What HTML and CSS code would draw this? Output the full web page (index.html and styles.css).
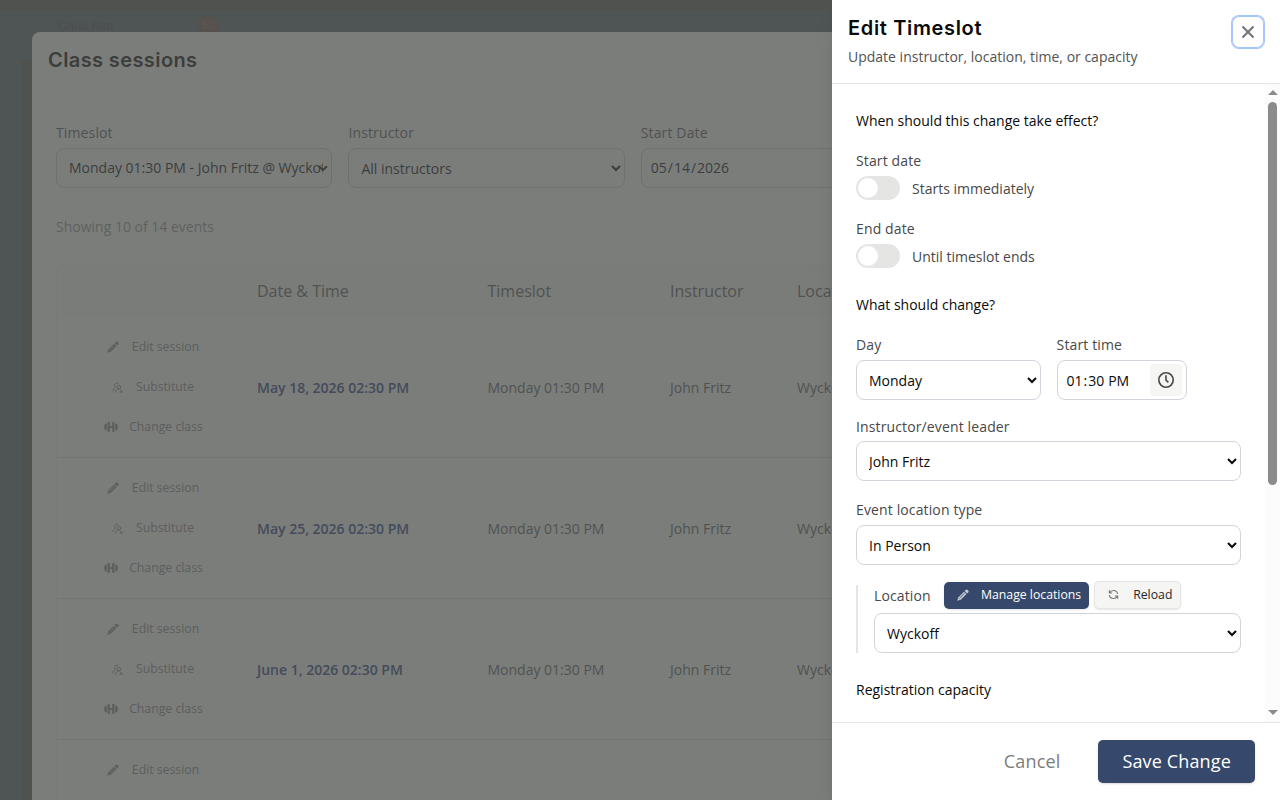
FILE: index.html
```html
<!DOCTYPE html>
<html lang="en">
<head>
    <meta charset="UTF-8">
    <meta name="viewport" content="width=device-width, initial-scale=1.0">
    <title>Edit Timeslot</title>
    <link rel="stylesheet" href="styles.css">
</head>
<body>
    <!-- shared icons -->
    <svg class="sprite" aria-hidden="true">
        <symbol id="pencil" viewBox="0 0 16 16">
            <path fill="currentColor" fill-rule="evenodd" d="M11.600 1.200a1.800 1.800 0 0 1 2.500 0l.8.8a1.800 1.800 0 0 1 0 2.500l-1.500 1.500-3.300-3.300zM9.300 3.500l3.300 3.300-7.600 7.600L.3 15.700l1.300-4.500zM9.500 5.600l-5.400 5.400.5.500 5.400-5.400zM2.700 12.200l-.5 1.600 1.600-.5z"/>
        </symbol>
        <symbol id="swap-user" viewBox="0 0 16 16">
            <g fill="none" stroke="currentColor" stroke-width="1.3" stroke-linecap="round">
                <circle cx="9.8" cy="7.4" r="2.7"/>
                <path d="M5 15c.4-2.400 1.900-4.300 4.500-4.600M12 11.200l2.600 3.300M11.800 14.600h3.400M4.200 7.200C2.900 4.200 4.500 1.500 7 1.500c1 0 1.600.4 2 1M4.400 8.500C2.500 9.200 1.400 10.600 1.200 12.500"/>
            </g>
        </symbol>
        <symbol id="dumbbell" viewBox="0 0 18 14">
            <g fill="currentColor">
                <rect x="1.600" y="3" width="2.400" height="8" rx="1.200"/>
                <rect x="5" y="1" width="2.600" height="12" rx="1.200"/>
                <rect x="10.400" y="1" width="2.600" height="12" rx="1.200"/>
                <rect x="14" y="3" width="2.400" height="8" rx="1.200"/>
                <rect x="0.600" y="6" width="1.400" height="2"/>
                <rect x="7" y="6" width="4" height="2"/>
                <rect x="16" y="6" width="1.400" height="2"/>
            </g>
        </symbol>
        <symbol id="reload" viewBox="0 0 16 16">
            <path fill="none" stroke="currentColor" stroke-width="1.700" d="M2 1.800v4h4M2.300 5.500C3.500 3.300 5.600 2.200 8 2.200c3 0 5.500 2 6 4.800M14 14.200v-4h-4M13.700 10.500c-1.200 2.200-3.300 3.300-5.700 3.300-3 0-5.500-2-6-4.800"/>
        </symbol>
    </svg>

    <div class="page">
        <div class="topbar"></div>
        <div class="page-head">
            <span class="user-name">Chris Alto</span>
            <span class="badge">50</span>
            <span class="page-title">Edit Class of</span>
            <span class="page-title page-title-end">and Yoga</span>
        </div>
        <div class="sidebar"></div>
    </div>

    <div class="modal">
        <h2 class="title modal-title">Class sessions</h2>
        <div class="filters">
            <label class="field">Timeslot
                <span class="timeslot">
                    <select class="control"><option>Monday 01:30 PM - John Fritz @ Wyckoff</option></select>
                    <svg class="chevron" width="10" height="7" viewBox="0 0 10 7"><path d="M1 1.300l4 3.700 4-3.700" fill="none" stroke="currentColor" stroke-width="2"/></svg>
                </span>
            </label>
            <label class="field">Instructor
                <select class="control"><option>All instructors</option></select>
            </label>
            <label class="field">Start Date
                <input class="control" type="date" value="2026-05-14">
            </label>
        </div>
        <p class="count">Showing 10 of 14 events</p>
        <div class="table">
            <div class="row row-head">
                <div></div><div>Date &amp; Time</div><div>Timeslot</div><div>Instructor</div><div>Location</div>
            </div>
            <div class="row">
                <div class="actions">
                    <span class="action"><svg class="i-pencil"><use href="#pencil"/></svg>Edit session</span>
                    <span class="action"><svg class="i-swap"><use href="#swap-user"/></svg>Substitute</span>
                    <span class="action"><svg class="i-bell"><use href="#dumbbell"/></svg>Change class</span>
                </div>
                <div class="date">May 18, 2026 02:30 PM</div><div>Monday 01:30 PM</div><div>John Fritz</div><div>Wyckoff</div>
            </div>
            <div class="row">
                <div class="actions">
                    <span class="action"><svg class="i-pencil"><use href="#pencil"/></svg>Edit session</span>
                    <span class="action"><svg class="i-swap"><use href="#swap-user"/></svg>Substitute</span>
                    <span class="action"><svg class="i-bell"><use href="#dumbbell"/></svg>Change class</span>
                </div>
                <div class="date">May 25, 2026 02:30 PM</div><div>Monday 01:30 PM</div><div>John Fritz</div><div>Wyckoff</div>
            </div>
            <div class="row">
                <div class="actions">
                    <span class="action"><svg class="i-pencil"><use href="#pencil"/></svg>Edit session</span>
                    <span class="action"><svg class="i-swap"><use href="#swap-user"/></svg>Substitute</span>
                    <span class="action"><svg class="i-bell"><use href="#dumbbell"/></svg>Change class</span>
                </div>
                <div class="date">June 1, 2026 02:30 PM</div><div>Monday 01:30 PM</div><div>John Fritz</div><div>Wyckoff</div>
            </div>
            <div class="row row-last">
                <div class="actions">
                    <span class="action"><svg class="i-pencil"><use href="#pencil"/></svg>Edit session</span>
                </div>
            </div>
        </div>
    </div>

    <div class="drawer">
        <header class="drawer-head">
            <div>
                <h2 class="title drawer-title">Edit Timeslot</h2>
                <p class="subtitle">Update instructor, location, time, or capacity</p>
            </div>
            <button class="close" aria-label="Close">
                <svg width="14" height="14" viewBox="0 0 14 14"><path d="M1.500 1.500l11 11M12.500 1.500l-11 11" stroke="currentColor" stroke-width="2" fill="none"/></svg>
            </button>
        </header>

        <div class="drawer-main">
            <form class="form">
                <h3 class="section">When should this change take effect?</h3>
                <div class="field toggle-field">Start date
                    <div class="toggle-row"><span class="toggle"></span><span class="toggle-text">Starts immediately</span></div>
                </div>
                <div class="field toggle-field">End date
                    <div class="toggle-row"><span class="toggle"></span><span class="toggle-text">Until timeslot ends</span></div>
                </div>

                <h3 class="section section-change">What should change?</h3>
                <div class="day-time">
                    <label class="field">Day
                        <select class="control"><option>Monday</option></select>
                    </label>
                    <label class="field">Start time
                        <span class="control time-box">
                            <input class="time" type="time" value="13:30">
                            <span class="clock">
                                <svg width="18" height="18" viewBox="0 0 18 18" fill="none" stroke="currentColor" stroke-width="1.600"><circle cx="9" cy="9" r="7.200"/><path d="M9 4.200v5l2.400 2.200"/></svg>
                            </span>
                        </span>
                    </label>
                </div>
                <label class="field leader">Instructor/event leader
                    <select class="control"><option>John Fritz</option></select>
                </label>
                <label class="field type">Event location type
                    <select class="control"><option>In Person</option></select>
                </label>
                <div class="location">
                    <div class="location-head">
                        <span class="location-label">Location</span>
                        <button type="button" class="btn-small btn-manage"><svg class="i-pencil"><use href="#pencil"/></svg>Manage locations</button>
                        <button type="button" class="btn-small btn-reload"><svg class="i-reload"><use href="#reload"/></svg>Reload</button>
                    </div>
                    <select class="control"><option>Wyckoff</option></select>
                </div>
                <h3 class="section section-capacity">Registration capacity</h3>
            </form>
            <div class="scrollbar">
                <span class="arrow-up"></span>
                <span class="thumb"></span>
                <span class="arrow-down"></span>
            </div>
        </div>

        <footer class="drawer-foot">
            <button class="btn btn-cancel">Cancel</button>
            <button class="btn btn-save">Save Change</button>
        </footer>
    </div>
</body>
</html>
```
FILE: styles.css
```css
* {
    box-sizing: border-box;
    margin: 0;
    padding: 0;
}
body {
    width: 1280px;
    height: 800px;
    overflow: hidden;
    position: relative;
    font-family: "Open Sans", sans-serif;
    font-size: 14px;
    line-height: 20px;
    color: #0a0a0a;
    background: #4f5455;
}
input, select, button {
    font: inherit;
    color: inherit;
}
button {
    border: none;
    background: none;
}
svg {
    display: block;
    flex-shrink: 0;
}
.sprite {
    position: absolute;
    width: 0;
    height: 0;
}
.title {
    font-family: Inter, sans-serif;
    font-size: 20px;
    line-height: 24px;
    font-weight: 600;
    letter-spacing: 0.4px;
}

/* page behind the modal */
.page {
    height: 800px;
    display: flex;
    flex-direction: column;
}
.topbar {
    height: 10px;
    background: #50524f;
}
.page-head {
    height: 50px;
    flex-shrink: 0;
    display: flex;
    align-items: flex-start;
    padding: 6px 0 0 58px;
    font-family: Inter, sans-serif;
    color: #4b4f50;
}
.user-name {
    width: 139px;
    font-size: 12px;
}
.badge {
    width: 22px;
    height: 18px;
    border-radius: 9px;
    background: #56514d;
    color: #5e5854;
    font-size: 10px;
    line-height: 18px;
    text-align: center;
}
.page-title {
    margin: 13px 0 0 44px;
    width: 205px;
    white-space: nowrap;
    font-size: 24px;
    line-height: 28px;
    font-weight: 600;
}
.page-title-end {
    margin-left: 12px;
}
.sidebar {
    flex: 1;
    margin-left: 21px;
    background: #50524f;
}

/* sessions modal */
.modal {
    position: absolute;
    left: 32px;
    top: 32px;
    width: 1216px;
    height: 768px;
    padding: 16px 24px 0;
    overflow: hidden;
    border-radius: 8px 8px 0 0;
    background: #7b7d7b;
    color: #505250;
}
.modal-title {
    margin-left: -8px;
    color: #3c3e3c;
}
.filters {
    display: grid;
    grid-template-columns: repeat(4, 276.400px);
    gap: 16px;
    margin-top: 51px;
}
.field {
    display: flex;
    flex-direction: column;
    gap: 5px;
    font-weight: 500;
    letter-spacing: 0.130px;
}
.control {
    width: 100%;
    height: 40px;
    padding: 0 8px;
    border: 1px solid #d1d5db;
    border-radius: 8px;
    background: transparent;
    font-weight: 400;
    letter-spacing: normal;
}
.modal .control {
    border-color: #6f7170;
    color: #3c3e3d;
}
.timeslot {
    display: block;
    height: 40px;
    position: relative;
    color: #3c3e3d;
}
.timeslot .control {
    appearance: none;
    padding: 0 8px 0 12px;
}
.chevron {
    position: absolute;
    right: 4px;
    top: 17px;
}
.count {
    margin-top: 29px;
    color: #5f615f;
}
.table {
    margin-top: 27px;
    border: 1px solid #787a78;
    border-bottom: none;
    border-radius: 8px 8px 0 0;
}
.row {
    display: grid;
    grid-template-columns: 184px 230.500px 182.500px 127px 1fr;
    align-items: center;
    height: 141px;
    padding-top: 1px;
    border-bottom: 1px solid #737573;
}
.row-last {
    height: 58px;
    border-bottom: none;
}
.row > div {
    padding: 0 16px;
}
.row-head {
    height: 52px;
    font-size: 16px;
    background: #7a7c7a;
    border-radius: 8px 8px 0 0;
    border-bottom-color: #797b79;
}
.row .date {
    font-weight: 600;
    color: #444b5a;
}
.row > .actions {
    align-self: start;
    display: flex;
    flex-direction: column;
    align-items: center;
    padding: 9px 0 0 8px;
}
.action {
    display: flex;
    align-items: center;
    gap: 12px;
    height: 40px;
    font-size: 12.250px;
    font-weight: 500;
    color: #5c5e5c;
}
.i-pencil {
    width: 12px;
    height: 12px;
}
.action .i-pencil {
    margin-right: 1px;
}
.i-swap {
    width: 11px;
    height: 11px;
    margin-right: 1px;
}
.i-bell {
    width: 16px;
    height: 12px;
    margin-right: -2px;
}
.i-reload {
    width: 11px;
    height: 11px;
}

/* drawer */
.drawer {
    position: absolute;
    right: 0;
    top: 0;
    width: 448px;
    height: 800px;
    display: flex;
    flex-direction: column;
    background: #fff;
    box-shadow: 0 20px 25px -5px rgba(0, 0, 0, 0.1), 0 8px 10px -6px rgba(0, 0, 0, 0.1);
}
.drawer-head {
    display: flex;
    justify-content: space-between;
    height: 84px;
    padding: 16px;
    border-bottom: 1px solid #e5e5e5;
}
.drawer-title {
    letter-spacing: 0.650px;
}
.subtitle {
    margin-top: 7px;
    color: #525252;
}
.close {
    display: flex;
    align-items: center;
    justify-content: center;
    width: 32px;
    height: 32px;
    border-radius: 7px;
    color: #737373;
    box-shadow: inset 0 0 0 1px #a4c5fb, 0 0 0 1px #a4c5fb;
}
.drawer-main {
    flex: 1;
    display: flex;
    overflow: hidden;
}
.form {
    flex: 1;
    padding: 27px 24px 0;
    color: #484848;
}
.section {
    font-size: 14px;
    line-height: 20px;
    font-weight: 500;
    color: #0a0a0a;
}
.toggle-field {
    margin-top: 20px;
}
.toggle-field + .toggle-field {
    margin-top: 19px;
}
.toggle-row {
    display: flex;
    align-items: center;
    gap: 12px;
    height: 24px;
    letter-spacing: normal;
}
.toggle-text {
    padding-top: 2px;
}
.toggle {
    width: 44px;
    height: 24px;
    padding: 2px;
    border-radius: 12px;
    background: #e5e5e4;
}
.toggle::before {
    content: "";
    display: block;
    width: 20px;
    height: 20px;
    border-radius: 50%;
    background: #fff;
}
.form .control {
    color: #0a0a0a;
}
.section-change {
    margin-top: 27px;
}
.day-time {
    display: grid;
    grid-template-columns: 184.600px 130px;
    gap: 16px;
    margin-top: 20px;
}
.time-box {
    display: flex;
    align-items: center;
    justify-content: space-between;
    padding: 0 4px 0 8px;
}
.time {
    width: 80px;
    padding-top: 1px;
    border: none;
    outline: none;
    background: transparent;
}
.time::-webkit-calendar-picker-indicator {
    display: none;
}
.clock {
    display: flex;
    align-items: center;
    justify-content: center;
    width: 32px;
    height: 32px;
    border-radius: 4px;
    background: #f5f5f4;
    color: #484848;
}
.leader {
    gap: 4px;
    margin-top: 17px;
}
.type {
    margin-top: 19px;
}
.location {
    height: 68px;
    margin-top: 20px;
    padding-left: 16px;
    border-left: 2px solid #e5e5e5;
}
.location-head {
    display: flex;
    align-items: center;
    height: 28px;
    margin-bottom: 4px;
    position: relative;
    top: -4px;
}
.location .control {
    margin-top: -4px;
}
.location-label {
    width: 70px;
    padding-top: 2px;
    font-weight: 500;
    letter-spacing: 0.130px;
}
.btn-small {
    display: flex;
    align-items: center;
    gap: 12px;
    height: 27px;
    padding: 0 8px 1px 13px;
    border-radius: 5px;
    font-size: 12.250px;
    font-weight: 500;
    box-shadow: 0 1px 2px rgba(0, 0, 0, 0.1);
}
.btn-manage {
    background: #36486b;
    color: #fff;
}
.btn-manage svg {
    opacity: 0.7;
}
.btn-reload {
    margin-left: 5px;
    height: 28px;
    border: 1px solid #e5e5e5;
    background: #f5f5f4;
    color: #262626;
}
.btn-reload svg {
    opacity: 0.6;
    margin-right: 2px;
}
.section-capacity {
    margin-top: 27px;
}
.scrollbar {
    display: flex;
    flex-direction: column;
    align-items: center;
    width: 15px;
    padding: 6px 0 7px;
    background: #fcfcfc;
}
.arrow-up, .arrow-down {
    border: 5px solid transparent;
}
.arrow-up {
    border-top: none;
    border-bottom: 5px solid #8b8b8b;
}
.arrow-down {
    margin-top: auto;
    border-bottom: none;
    border-top: 5px solid #8b8b8b;
}
.thumb {
    width: 9px;
    height: 383px;
    margin-top: 7px;
    border-radius: 5px;
    background: #8b8b8b;
}
.drawer-foot {
    display: flex;
    justify-content: flex-end;
    align-items: center;
    gap: 14px;
    height: 78px;
    padding-right: 25px;
    border-top: 1px solid #e5e5e5;
}
.btn {
    height: 43px;
    padding: 0 24px 2px;
    border-radius: 5px;
    font-size: 18px;
    font-weight: 500;
    letter-spacing: 0.150px;
}
.btn-cancel {
    color: #7c7c7c;
}
.btn-save {
    background: #36486b;
    color: #fff;
    box-shadow: 0 1px 2px rgba(0, 0, 0, 0.15);
}
```
